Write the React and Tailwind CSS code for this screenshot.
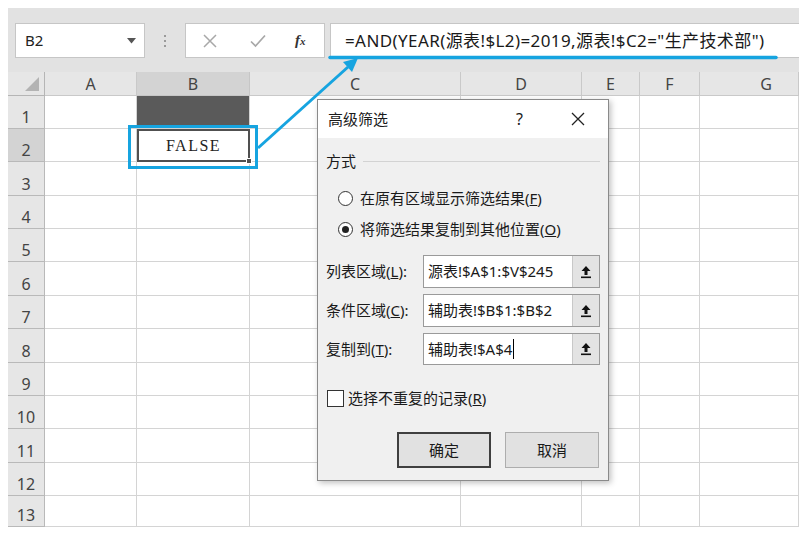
import React from 'react';

const FONT = { fontFamily: '"Noto Sans", "Noto Sans CJK SC", sans-serif' };

const cols = ['A', 'B', 'C', 'D', 'E', 'F', 'G'];
const rowHeights = [33, 33, 34, 33, 33, 34, 33, 34, 33, 33, 34, 33, 31];

const UpArrow = () => (
  <svg width="12" height="14" viewBox="0 0 12 14">
    <path d="M6 1 L10.5 6 H7.5 V10 H4.5 V6 H1.5 Z" fill="#111" />
    <rect x="1" y="11.5" width="10" height="1.6" fill="#111" />
  </svg>
);

const RangeInput = ({ value, caret }) => (
  <div className="flex w-[177px] h-full border border-[#9a9a9a] bg-white">
    <div className="flex-1 flex items-center pl-[4px] text-[15px] text-[#1a1a1a]">
      {value}
      {caret && <span className="inline-block w-px h-[20px] bg-black ml-px" />}
    </div>
    <div className="w-[27px] h-full bg-[#e3e3e3] border-l border-[#c8c8c8] flex items-center justify-center">
      <UpArrow />
    </div>
  </div>
);

const Dialog = () => (
  <div
    className="absolute left-[309px] top-[91px] w-[292px] h-[382px] border border-[#8a8a8a] bg-[#f0f0f0] shadow-[2px_2px_6px_rgba(0,0,0,0.25)] flex flex-col text-[#1a1a1a]"
    style={FONT}
  >
    {/* title bar */}
    <div className="h-[38px] bg-white flex items-center pl-[10px] text-[15px]">
      <span>高级筛选</span>
      <span className="ml-auto mr-[48px] text-[16px]">?</span>
      <svg width="14" height="14" viewBox="0 0 14 14" className="mr-[23px]">
        <path d="M1 1 L13 13 M13 1 L1 13" stroke="#222" strokeWidth="1.3" />
      </svg>
    </div>

    <div className="flex flex-col px-[8px] text-[15px]">
      <div className="mt-[13px] h-[20px] flex items-center">
        <span>方式</span>
        <div className="flex-1 h-px bg-[#d3d3d3] ml-[7px]" />
      </div>

      <div className="mt-[17px] h-[20px] flex items-center pl-[12px]">
        <span className="w-[15px] h-[15px] rounded-full border border-[#333] bg-white" />
        <span className="ml-[7px]">在原有区域显示筛选结果(<u>F</u>)</span>
      </div>
      <div className="mt-[11px] h-[20px] flex items-center pl-[12px]">
        <span className="w-[15px] h-[15px] rounded-full border border-[#333] bg-white flex items-center justify-center">
          <span className="w-[7px] h-[7px] rounded-full bg-[#222]" />
        </span>
        <span className="ml-[7px]">将筛选结果复制到其他位置(<u>O</u>)</span>
      </div>

      <div className="mt-[16px] h-[33px] flex items-center justify-between">
        <span>列表区域(<u>L</u>):</span>
        <RangeInput value="源表!$A$1:$V$245" />
      </div>
      <div className="mt-[6px] h-[33px] flex items-center justify-between">
        <span>条件区域(<u>C</u>):</span>
        <RangeInput value="辅助表!$B$1:$B$2" />
      </div>
      <div className="mt-[6px] h-[32px] flex items-center justify-between">
        <span>复制到(<u>T</u>):</span>
        <RangeInput value="辅助表!$A$4" caret />
      </div>

      <div className="mt-[23px] h-[20px] flex items-center pl-px">
        <span className="w-[17px] h-[17px] border border-[#333] bg-white" />
        <span className="ml-[4px]">选择不重复的记录(<u>R</u>)</span>
      </div>

      <div className="mt-[24px] flex justify-end gap-[14px] pr-px">
        <button className="w-[94px] h-[36px] bg-[#e1e1e1] border-2 border-[#3f3f3f] text-[15px]">确定</button>
        <button className="w-[94px] h-[36px] bg-[#e1e1e1] border border-[#adadad] text-[15px]">取消</button>
      </div>
    </div>
  </div>
);

const Callouts = () => (
  <svg className="absolute left-0 top-0 pointer-events-none" width="791" height="519">
    <rect x="121.5" y="118.5" width="127" height="41" fill="none" stroke="#16a4e0" strokeWidth="3" />
    <line x1="322" y1="49.5" x2="768" y2="49.5" stroke="#16a4e0" strokeWidth="3.5" strokeLinecap="round" />
    <line x1="250" y1="140" x2="340" y2="59" stroke="#16a4e0" strokeWidth="3" />
    <polygon points="350,50 344,64 335,54" fill="#16a4e0" />
  </svg>
);

export default function App() {
  return (
    <div className="w-[807px] h-[535px] bg-white p-2" style={FONT}>
      <div className="relative w-[791px] h-[519px] overflow-hidden bg-white">
        {/* formula bar */}
        <div className="h-[64px] bg-[#e2e2e2] flex items-start pt-[15px]">
          <div className="ml-[7px] w-[130px] h-[35px] bg-white border border-[#c6c6c6] flex items-center pl-[9px] text-[15px] text-[#222]">
            <span>B2</span>
            <svg width="9" height="6" viewBox="0 0 9 6" className="ml-auto mr-[8px]">
              <path d="M0 0 H9 L4.5 5.5 Z" fill="#555" />
            </svg>
          </div>
          <div className="w-[40px] h-[35px] flex flex-col items-center justify-center gap-[3px]">
            <span className="w-[2px] h-[2px] bg-[#9a9a9a]" />
            <span className="w-[2px] h-[2px] bg-[#9a9a9a]" />
            <span className="w-[2px] h-[2px] bg-[#9a9a9a]" />
          </div>
          <div className="w-[140px] h-[35px] bg-white border border-[#c6c6c6] flex items-center">
            <svg width="14" height="14" viewBox="0 0 14 14" className="ml-[17px]">
              <path d="M1 1 L13 13 M13 1 L1 13" stroke="#a8a8a8" strokeWidth="1.5" />
            </svg>
            <svg width="16" height="14" viewBox="0 0 16 14" className="ml-[33px]">
              <path d="M1 7.5 L5.5 12 L15 1.5" fill="none" stroke="#a8a8a8" strokeWidth="1.7" />
            </svg>
            <span
              className="ml-[29px] text-[15px] italic font-bold text-[#333]"
              style={{ fontFamily: '"Liberation Serif", serif' }}
            >
              f<span className="text-[11px]">x</span>
            </span>
          </div>
          <div className="ml-[5px] flex-1 h-[35px] bg-white border border-r-0 border-[#c6c6c6] flex items-center pl-[14px] text-[17px] tracking-[0.4px] text-[#1a1a1a] whitespace-nowrap">
            =AND(YEAR(源表!$L2)=2019,源表!$C2="生产技术部")
          </div>
        </div>

        {/* sheet grid */}
        <div
          className="grid grid-cols-[37px_92px_113px_211px_121px_58px_60px_99px] bg-white text-[#444]"
          style={{ gridTemplateRows: `24px ${rowHeights.map((h) => h + 'px').join(' ')}` }}
        >
          <div className="bg-[#e6e6e6] border-r border-b border-[#b5b5b5] relative">
            <svg width="14" height="14" viewBox="0 0 14 14" className="absolute right-[5px] bottom-[4px]">
              <path d="M14 0 V14 H0 Z" fill="#b3b3b3" />
            </svg>
          </div>
          {cols.map((c) => (
            <div
              key={c}
              className={`border-b border-[#a9a9a9] flex items-center text-[16px] ${
                c === 'B' ? 'bg-[#d3d3d3] border-r border-[#c6c6c6]' : 'bg-[#e6e6e6] border-r border-[#c9c9c9]'
              } ${c === 'G' ? 'justify-center pl-[34px]' : 'justify-center'}`}
            >
              {c}
            </div>
          ))}

          {rowHeights.map((h, i) => {
            const r = i + 1;
            return (
              <React.Fragment key={r}>
                <div
                  className={`border-r border-b border-[#b9b9b9] flex items-end justify-center pb-px text-[16px] leading-[20px] ${
                    r === 2 ? 'bg-[#d3d3d3]' : 'bg-[#e6e6e6]'
                  }`}
                >
                  {r}
                </div>
                {cols.map((c) => {
                  if (c === 'B' && r === 1) {
                    return <div key={c} className="bg-[#5a5a5a] border-r border-b border-[#d4d4d4]" />;
                  }
                  if (c === 'B' && r === 2) {
                    return (
                      <div
                        key={c}
                        className="relative border-2 border-[#505050] flex items-center justify-center text-[16px] tracking-[1.5px] text-[#222]"
                        style={{ fontFamily: '"Liberation Serif", serif' }}
                      >
                        FALSE
                        <span className="absolute -right-[4px] -bottom-[4px] w-[6px] h-[6px] bg-[#505050] border border-white" />
                      </div>
                    );
                  }
                  return <div key={c} className="border-r border-b border-[#d4d4d4]" />;
                })}
              </React.Fragment>
            );
          })}
        </div>

        <Callouts />
        <Dialog />
      </div>
    </div>
  );
}
